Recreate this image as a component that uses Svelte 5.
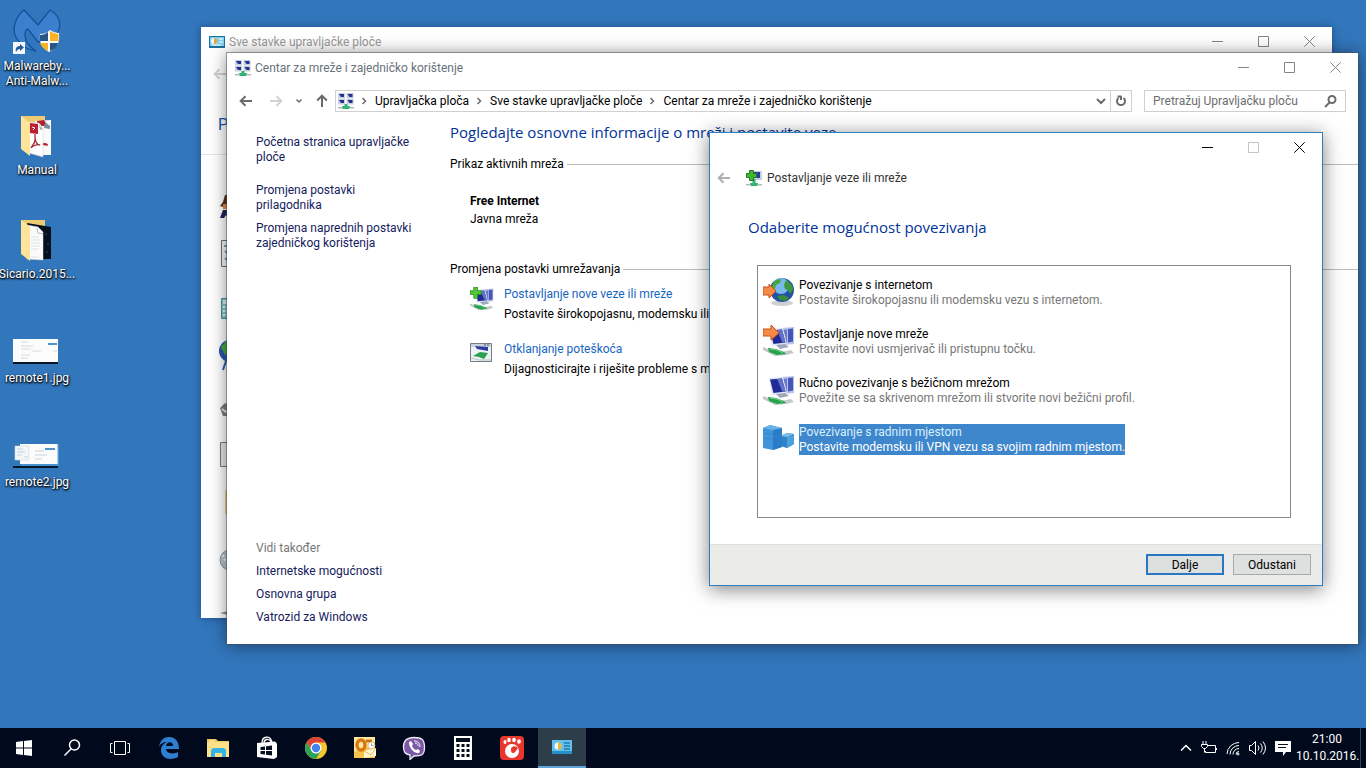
<script lang="ts">
	interface Shortcut {
		name: string;
		icon: string;
	}

	const shortcuts: Shortcut[] = [
		{ name: 'Malwareby... Anti-Malw...', icon: 'malware' },
		{ name: 'Manual', icon: 'manual' },
		{ name: 'Sicario.2015...', icon: 'movie' },
		{ name: 'remote1.jpg', icon: 'thumb1' },
		{ name: 'remote2.jpg', icon: 'thumb2' }
	];

	const crumbs = ['Upravljačka ploča', 'Sve stavke upravljačke ploče', 'Centar za mreže i zajedničko korištenje'];

	const tasks = [
		'Početna stranica upravljačke ploče',
		'Promjena postavki prilagodnika',
		'Promjena naprednih postavki zajedničkog korištenja'
	];

	const seeAlso = ['Internetske mogućnosti', 'Osnovna grupa', 'Vatrozid za Windows'];

	const options = [
		{ icon: 'globe', title: 'Povezivanje s internetom', text: 'Postavite širokopojasnu ili modemsku vezu s internetom.' },
		{ icon: 'newnet', title: 'Postavljanje nove mreže', text: 'Postavite novi usmjerivač ili pristupnu točku.' },
		{ icon: 'wireless', title: 'Ručno povezivanje s bežičnom mrežom', text: 'Povežite se sa skrivenom mrežom ili stvorite novi bežični profil.' },
		{ icon: 'work', title: 'Povezivanje s radnim mjestom', text: 'Postavite modemsku ili VPN vezu sa svojim radnim mjestom.' }
	];

	const apps = ['start', 'find', 'taskview', 'edge', 'explorer', 'store', 'chrome', 'outlook', 'viber', 'calc', 'gom', 'panel'];

	const panelItems = ['user', 'window', 'phone', 'earth', 'chip', 'box', 'folder', 'disc', 'tip'];

	let selected = $state(3);
	let query = $state('');
</script>

{#snippet network()}
	<svg width="16" height="16" viewBox="0 0 16 16" aria-hidden="true">
		<g fill="#c6cee0">
			<rect x="0" y="0" width="7" height="5.5" /><rect x="8.5" y="0" width="7" height="5.5" />
			<rect x="0" y="6" width="7" height="5.5" /><rect x="8.5" y="6" width="7" height="5.5" />
		</g>
		<g fill="#25308f">
			<path d="M1 1h5v3H3z" /><path d="M9.500 1h5v3h-3z" />
			<path d="M1 7h5v3H3z" /><path d="M9.500 7h5v3h-3z" />
		</g>
		<path d="M0 14h16v1.500H0z" fill="#b3bbb7" />
		<path d="M6.500 11h3v2H12l-1 3H5l-1-3h2.500z" fill="#2fb472" />
	</svg>
{/snippet}

{#snippet controls(disabled: boolean)}
	<div class="controls" class:disabled>
		<button aria-label="Minimiziraj"><svg width="11" height="11" viewBox="0 0 11 11"><path d="M0 5.500h11" /></svg></button>
		<button class="max" {disabled} aria-label="Maksimiziraj"><svg width="11" height="11" viewBox="0 0 11 11"><path d="M.5.5h10v10H.5z" /></svg></button>
		<button aria-label="Zatvori"><svg width="11" height="11" viewBox="0 0 11 11"><path d="M.3.3l10.400 10.400M10.700.3L.3 10.700" /></svg></button>
	</div>
{/snippet}

{#snippet arrow(dir: string)}
	<svg class="arrow {dir}" width="14" height="12" viewBox="0 0 14 12" aria-hidden="true">
		<path d="M13 6H2M6.500 1.200L1.700 6l4.800 4.800" />
	</svg>
{/snippet}

{#snippet monitors()}
	<path d="M18 3l13-1v17l-10 1z" fill="#b9c4e8" /><path d="M25 4l5-.5v13l-5 1z" fill="#4556b8" />
	<path d="M19 5l5-.5v14h-3z" fill="#6878c8" />
	<path d="M6 4l14-1 4 16-15 2z" fill="#dfe5f5" /><path d="M7 5.500l12-1 3.500 13-12 1.500z" fill="#202b96" />
	<path d="M14 5l5-.5 3.500 13-3 .3z" fill="#6272ca" />
	<path d="M13 20l9-1 4 3-9 2z" fill="#9fa8b8" />
{/snippet}

{#snippet cable()}
	<path d="M0 22l8 3 10 2 10-2 3 3-8 2-11 1-4-2-8-4z" fill="#c2c9c6" />
	<path d="M5 23l8 1 8 3 2 2-9 1-8-3z" fill="#25a24d" />
	<path d="M7 24l7 1 6 3" fill="none" stroke="#7cd08f" />
{/snippet}

<main class="desktop">
	<div class="shortcuts">
		{#each shortcuts as item}
			<button class="shortcut">
				<svg width="48" height="48" viewBox="0 0 48 48" aria-hidden="true">
					{#if item.icon === 'malware'}
						<path d="M11 2C2 9-2 23 4 31c4 6 11 11 19 12-8-5-13-12-10-21l2-1 10 13 12-2c11-7 15-21 0-30L25 17z" fill="#3b80cd" stroke="#174f9e" stroke-width="1.300" />
						<path d="M37 22c3 2 6 3 9 3 1 10-2 15-10 19-7-4-10-9-9-18 4 0 7-1 10-4z" fill="#fff" />
						<path d="M35 24v9h-8v-6c3 0 6-1 8-3z" fill="#285784" />
						<path d="M37 23c3 2 6 3 8.500 3v7H37z" fill="#f9b126" />
						<path d="M27 35h8v8c-5-3-7-5-8-8z" fill="#f9b126" /><path d="M37 35h8c-1 4-3 6-8 8z" fill="#285784" />
						<path d="M0 34h12v12H0z" fill="#f4f6f9" />
						<path d="M3 44c-1-4 1-6 4-6v-2l4 3.500L7 43v-2c-2 0-3 1-4 3z" fill="#245b9e" />
					{:else if item.icon === 'manual'}
						<path d="M8 4h24v30H12z" fill="#eccb74" />
						<path d="M22 9l16-1v35H23z" fill="#fafafa" />
						<path d="M24 9l7-1 4 6H24z" fill="#b61e30" /><path d="M32 10l5 4v3l-6-1z" fill="#7d8b9c" />
						<path d="M27 32c4-2 8-1 8 1s-4-1-8 1z" fill="#b61e30" />
						<path d="M16 10l10 1 4 5v29l-14-4z" fill="#fff" stroke="#cdcdcd" stroke-width=".5" />
						<path d="M17 11l8 1v10l-8-1z" fill="#bc1d2f" /><path d="M26 13l4 4-3 1z" fill="#aaa" />
						<path d="M19 15l3 1-2 2" stroke="#fff" fill="none" />
						<path d="M22 22v6c0 3-3 6-4 8 2-3 7-4 9-3-4 0-5-6-5-8" stroke="#a5303a" fill="none" stroke-width="1.300" />
						<path d="M8 4l9 7v33l-9-7z" fill="#ffe398" />
					{:else if item.icon === 'movie'}
						<path d="M8 4h24v8H12z" fill="#eccb74" />
						<path d="M14 7l24 4v32H20z" fill="#04101d" /><path d="M32 18h2M34 28h2M33 36h2" stroke="#2b4358" />
						<path d="M14 9l11 2 5 5v28l-16-1z" fill="#fbfbfb" stroke="#ddd" stroke-width=".5" />
						<path d="M24 12l1 5 5 1" fill="none" stroke="#b7bdc2" />
						<path d="M18 21h8M18 24h9M18 27h9M18 30h9M18 33h8M18 41h8" stroke="#e0e2e4" />
						<path d="M8 4l9 7v34l-9-7z" fill="#ffe398" />
					{:else if item.icon === 'thumb1'}
						<path d="M0 19h45v24H0z" fill="#fcfcfc" /><path d="M0 42h45v2H0z" fill="#061728" />
						<path d="M35 24h9" stroke="#4f94cd" stroke-width="2" /><path d="M8 22h7M8 26h12M8 29h10M19 31h9M8 35h9M8 38h7M40 31h4" stroke="#d6dce0" />
					{:else}
						<path d="M7 20h38v20H7z" fill="#fcfcfc" /><path d="M45 20v21H8" stroke="#59aee2" fill="none" />
						<path d="M2 22h14v14H2z" fill="#f4f7f9" stroke="#ccd4da" stroke-width=".6" />
						<path d="M4 25h6M4 28h8M4 31h5M11 33h4M22 27h9M22 31h12M22 35h7" stroke="#c7d3db" />
						<path d="M32 25h10" stroke="#4f94cd" stroke-width="2" /><path d="M0 42h45v2H0z" fill="#061728" />
					{/if}
				</svg>
				<span>{item.name}</span>
			</button>
		{/each}
	</div>

	<section class="window back-window" aria-label="Sve stavke upravljačke ploče">
		<header class="titlebar">
			<svg width="16" height="16" viewBox="0 0 16 16" aria-hidden="true">
				<path d="M0 2h16v12H0z" fill="#1f6f9c" /><path d="M1 3h14v9H1z" fill="#7ed0f3" />
				<circle cx="5" cy="7" r="3" fill="#eef8fe" /><path d="M5 7V4a3 3 0 010 6z" fill="#f2a325" />
				<path d="M10 5h4M10 8h4M3 11h9" stroke="#fff" />
			</svg>
			<span class="title">Sve stavke upravljačke ploče</span>
			{@render controls(false)}
		</header>
		<div class="back-nav">{@render arrow('left faded')}</div>
		<h2 class="back-heading">P</h2>
		<div class="panel-items">
			{#each panelItems as item}
				<svg width="32" height="32" viewBox="0 0 32 32" aria-hidden="true">
					{#if item === 'user'}
						<path d="M1 14l3-4 2-7 8-1v10l-2 5z" fill="#59301d" /><path d="M4 12h8v5H4z" fill="#e58a41" /><path d="M1 26l3-8h9v8H9l-2-3-2 3z" fill="#25225e" />
					{:else if item === 'window'}
						<path d="M2.500-2.500h25v26h-25z" fill="#f6f7f8" stroke="#687078" /><path d="M5 3h22M6 8l3 3M6 15l3 3" stroke="#4d7da2" stroke-width="1.500" />
					{:else if item === 'phone'}
						<path d="M2.500 4.500h16v20h-16z" fill="#87c2c5" stroke="#4c9298" /><path d="M4 6h12v4H4z" fill="#d8f2f0" /><path d="M4 13h12M4 17h12M4 21h12" stroke="#ecffff" stroke-width="2" stroke-dasharray="2 1" />
					{:else if item === 'earth'}
						<circle cx="11" cy="6" r="11" fill="#2857ad" /><path d="M2 2l6-7 6 2-3 9-5 4z" fill="#43ae36" /><path d="M4 25l4-12" stroke="#285da9" stroke-width="2" />
					{:else if item === 'chip'}
						<path d="M1 12l5-5 12 5-8 8H4z" fill="#7b7d80" /><path d="M3 13l4 3 4-4" stroke="#e3e5e7" stroke-width="2" fill="none" />
					{:else if item === 'box'}
						<path d="M1.500-4.500h25v24h-25z" fill="#e6e8e9" stroke="#747a80" />
					{:else if item === 'folder'}
						<path d="M6-8h22v24H6z" fill="#efd78f" />
					{:else if item === 'disc'}
						<circle cx="11" cy="11" r="10" fill="#b8c3c8" stroke="#87969d" /><path d="M4 6l3 8" stroke="#f5f8f9" stroke-dasharray="2 2" stroke-width="2" />
					{:else}
						<path d="M1 13l8-2v4z" fill="#8d9093" />
					{/if}
				</svg>
			{/each}
		</div>
	</section>

	<section class="window center-window" aria-label="Centar za mreže i zajedničko korištenje">
		<header class="titlebar">
			{@render network()}
			<span class="title">Centar za mreže i zajedničko korištenje</span>
			{@render controls(false)}
		</header>
		<nav class="toolbar" aria-label="Navigacija">
			<button class="nav-button" aria-label="Natrag">{@render arrow('left')}</button>
			<button class="nav-button" aria-label="Naprijed">{@render arrow('right faded')}</button>
			<button class="nav-recent" aria-label="Nedavna mjesta"><svg width="6" height="6" viewBox="0 0 6 6"><path d="M.5 1.500L3 4l2.500-2.500" /></svg></button>
			<button class="nav-button" aria-label="Gore">{@render arrow('up')}</button>
			<div class="address">
				{@render network()}
				{#each crumbs as crumb}
					<svg class="chevron" width="6" height="8" viewBox="0 0 6 8" aria-hidden="true"><path d="M1.500 1l3 3-3 3" /></svg>
					<a href="#crumb">{crumb}</a>
				{/each}
				<button class="drop" aria-label="Prethodna mjesta"><svg width="10" height="8" viewBox="0 0 10 8"><path d="M1 2l4 4 4-4" /></svg></button>
				<button class="refresh" aria-label="Osvježi"><svg width="12" height="12" viewBox="0 0 12 12"><path d="M8.500 3a4 4 0 11-5 0M2.500 1.500h4M6 1v4" /></svg></button>
			</div>
			<label class="search">
				<input type="text" placeholder="Pretražuj Upravljačku ploču" aria-label="Pretražuj Upravljačku ploču" bind:value={query} />
				<svg width="13" height="13" viewBox="0 0 13 13" aria-hidden="true"><circle cx="8" cy="4.500" r="3.500" /><path d="M5.500 7.500L1 12" /></svg>
			</label>
		</nav>
		<div class="content">
			<aside class="sidebar">
				{#each tasks as task, i}
					<a href="#task" class:home={i === 0}>{task}</a>
				{/each}
				<div class="see-also">
					<h3>Vidi također</h3>
					{#each seeAlso as link}
						<a href="#see">{link}</a>
					{/each}
				</div>
			</aside>
			<div class="details">
				<h1>Pogledajte osnovne informacije o mreži i postavite veze</h1>
				<h2 class="group">Prikaz aktivnih mreža</h2>
				<div class="active-network">
					<strong>Free Internet</strong>
					<span>Javna mreža</span>
				</div>
				<h2 class="group">Promjena postavki umrežavanja</h2>
				<div class="setting">
					<svg width="24" height="24" viewBox="0 0 32 32" aria-hidden="true">
						{@render monitors()}{@render cable()}
						<path d="M5 0h5v5h5v5h-5v5H5v-5H0V5h5z" fill="#50c832" stroke="#238a23" />
					</svg>
					<div>
						<a href="#new">Postavljanje nove veze ili mreže</a>
						<p>Postavite širokopojasnu, modemsku ili VPN vezu</p>
					</div>
				</div>
				<div class="setting">
					<svg width="24" height="24" viewBox="0 0 24 24" aria-hidden="true">
						<path d="M.5 1.500h21v18H.5z" fill="#edf2f5" stroke="#727d87" /><path d="M1 2h20v3H1z" fill="#c8d2db" /><path d="M14 3h6" stroke="#46505d" stroke-dasharray="2 1" />
						<path d="M5 4l13 1v4L7 7z" fill="#2f39a0" /><path d="M3 14l7-4 8 1-4 6-5-2z" fill="#2ba054" /><path d="M1 16l8 2h12" stroke="#bac7c0" fill="none" />
					</svg>
					<div>
						<a href="#fix">Otklanjanje poteškoća</a>
						<p>Dijagnosticirajte i riješite probleme s mrežom</p>
					</div>
				</div>
			</div>
		</div>
	</section>

	<section class="window dialog" aria-label="Postavljanje veze ili mreže">
		{@render controls(true)}
		<header class="dialog-header">
			<button class="nav-button" aria-label="Natrag">{@render arrow('left muted')}</button>
			<svg width="16" height="16" viewBox="0 0 16 16" aria-hidden="true">
				<path d="M5 1h11v9H5z" fill="#c8d0e4" /><path d="M7 2h7v6H7z" fill="#2e3ba3" />
				<path d="M0 14h16v1.500H0z" fill="#b3bbb7" /><path d="M6.500 9h3v4H12l-1 3H5l-1-3h2.500z" fill="#2fb472" />
				<path d="M3.500.5h4v3h3v4h-3v3h-4v-3h-3v-4h3z" fill="#45b530" stroke="#1f7d22" />
			</svg>
			<span>Postavljanje veze ili mreže</span>
		</header>
		<h1>Odaberite mogućnost povezivanja</h1>
		<div class="options" role="listbox" aria-label="Mogućnosti povezivanja">
			{#each options as option, i}
				<button class="option" role="option" aria-selected={selected === i} class:selected={selected === i} onclick={() => (selected = i)}>
					<svg width="32" height="32" viewBox="0 0 32 32" aria-hidden="true">
						{#if option.icon === 'globe'}
							<ellipse cx="19" cy="27" rx="11" ry="3" fill="#9ba4ab" opacity=".5" />
							<circle cx="19" cy="14" r="12" fill="#2450a8" /><circle cx="18" cy="10" r="8" fill="#7ab9ee" />
							<path d="M13 4l5-1-1 4-4 2-1 4-3-1c0-4 1-6 4-8z" fill="#48a83e" /><path d="M23 4c4 2 7 5 7 10l-3 4-2-4-3-1-1-4z" fill="#3f993a" /><path d="M14 20l7-1 5 3-4 3-5-1z" fill="#398d35" />
							<path d="M0 11h6V8l7 7-7 7v-3H0z" fill="#f58a46" stroke="#c65316" />
						{:else if option.icon === 'newnet'}
							{@render monitors()}{@render cable()}
							<path d="M0 4h8V0l8 8-8 7v-4H0z" fill="#f58a46" stroke="#c65316" />
						{:else if option.icon === 'wireless'}
							{@render monitors()}{@render cable()}
						{:else}
							<path d="M17 13l7-3 7 1v10l-7 4-7-2z" fill="#2f83ca" /><path d="M24 14l7-2v9l-7 4z" fill="#4aa1dc" /><path d="M17 13l7-3 7 1-7 3z" fill="#78bce8" />
							<path d="M0 5l7-3 12 3v19l-9 3-10-2z" fill="#3f94da" /><path d="M10 7l9-2v19l-9 3z" fill="#2a7cc6" /><path d="M0 5l7-3 12 3-9 2z" fill="#69b2e8" />
							<path d="M1 10l8 1M1 15l8 1M11 14l7-2" stroke="#3588cd" />
						{/if}
					</svg>
					<span class="option-text">
						<span>{option.title}</span>
						<span class="option-hint">{option.text}</span>
					</span>
				</button>
			{/each}
		</div>
		<footer>
			<button class="action primary">Dalje</button>
			<button class="action">Odustani</button>
		</footer>
	</section>
</main>

<div class="taskbar">
	{#each apps as app}
		<button class="task {app}" aria-label={app}>
			<svg width="24" height="24" viewBox="0 0 24 24" aria-hidden="true">
				{#if app === 'start'}
					<path d="M4 6l7-1v6.500H4zM12 4.900L20 4v7.500h-8zM4 12.500h7V19l-7-1zM12 12.500h8V20l-8-1z" fill="#fff" />
				{:else if app === 'find'}
					<circle cx="14.500" cy="9" r="5" fill="none" stroke="#fff" stroke-width="1.500" /><path d="M11 13l-6.500 6.500" stroke="#fff" stroke-width="1.500" />
				{:else if app === 'taskview'}
					<path d="M6.500 5.500h11v13h-11zM4.500 7.500h-2v9h2M19.500 7.500h2v9h-2" fill="none" stroke="#fff" />
				{:else if app === 'edge'}
					<path d="M2 11C3 4 7 1 12 1c7 0 10 5 10 12H9c0 4 7 6 12 3v5c-7 4-17 2-17-7 0-4 3-7 6-8-4 0-7 2-8 5zm7-1h7c0-5-6-5-7 0z" fill="#2f7fd0" fill-rule="evenodd" />
				{:else if app === 'explorer'}
					<path d="M1 3h9l2 2h11v16H1z" fill="#efc758" /><path d="M1 6h22v15H1z" fill="#ffe08a" /><path d="M5 21v-7l2-2h11l2 2v7h-4v-4H9v4z" fill="#36b3e5" /><path d="M3 5h6" stroke="#fff5cb" />
				{:else if app === 'store'}
					<path d="M7 7c0-7 8-8 10-1M9 7c0-4 5-5 7-1" stroke="#fff" fill="none" stroke-width="1.300" /><path d="M2 7l18-1.500 2 2V21l-3 2-17-2z" fill="#fff" />
					<path d="M5.500 11l4.500-.6V14H5.500zM11 10.300l6-.8V14h-6zM5.500 15H10v3.600L5.500 18zM11 15h6v4.500l-6-.8z" fill="#07101f" />
				{:else if app === 'chrome'}
					<circle cx="12" cy="12" r="11" fill="#f4c72c" /><path d="M2.500 6.500A11 11 0 0121.500 6.500H12L8 14z" fill="#db4437" /><path d="M2.500 6.500A11 11 0 0012 23l5-8.500H8z" fill="#2da05a" />
					<circle cx="12" cy="12" r="5.500" fill="#fff" /><circle cx="12" cy="12" r="4.200" fill="#4383ec" />
				{:else if app === 'outlook'}
					<path d="M1 1h21v21H1z" fill="#fce8a5" /><path d="M1 16l21-8v14H1z" fill="#f7c34b" /><ellipse cx="8" cy="9" rx="4" ry="5" fill="none" stroke="#d77910" stroke-width="3.500" />
					<path d="M13 5h6" stroke="#cf741a" stroke-width="3" /><path d="M11 15l12-3v8l-12 2z" fill="#fff5d2" /><path d="M11 15l7 4 5-7" stroke="#e4b765" fill="none" /><circle cx="18.500" cy="9.500" r="3.500" fill="#fff" stroke="#c99d5d" stroke-width=".7" /><path d="M18.500 7.500v2h2" stroke="#777" fill="none" stroke-width=".7" />
				{:else if app === 'viber'}
					<path d="M12 1.500c8 0 10.500 2 10.500 10S19 20 12 20l-4 3.500V19c-5-1-6.500-3-6.500-8s2-9.500 10.500-9.500z" fill="#7b59a7" stroke="#efeaf7" stroke-width="1.300" />
					<path d="M7 6l2-1 2 3-1 2c1 2 2 3 4 4l2-1 2 2-1 2c-4 1-9-4-10-9z" fill="#fff" /><path d="M12 5c4 0 6 2 6 6M13 7c2 0 3 1 3 3" stroke="#fff" fill="none" />
				{:else if app === 'calc'}
					<path d="M3 0h18v24H3z" fill="#fff" /><path d="M5 2h14v4H5z" fill="#07101f" />
					<path d="M5.500 9.500h13M5.500 14.500h13M5.500 19.500h13" stroke="#07101f" stroke-width="3" stroke-dasharray="3 2" />
				{:else if app === 'gom'}
					<rect x="0" y="0" width="24" height="24" rx="4" fill="#e8372f" /><circle cx="12" cy="15" r="7" fill="#fff" /><path d="M11 13c0-3 6-4 7 0-2 0-2 4-5 4-2 0-2-2-2-4z" fill="#e8372f" />
					<ellipse cx="5" cy="6" rx="1.500" ry="2" fill="#fff" /><ellipse cx="9" cy="4" rx="1.800" ry="2.300" fill="#fff" /><ellipse cx="14" cy="4" rx="1.800" ry="2.300" fill="#fff" /><ellipse cx="19" cy="5.500" rx="1.800" ry="2.300" fill="#fff" />
				{:else}
					<path d="M2 5h20v14H2z" fill="#64bfe9" /><path d="M2 16h20v3H2z" fill="#2a8fc8" /><circle cx="8" cy="11" r="3.500" fill="#f1faff" /><path d="M8 11V7.500a3.500 3.500 0 010 7z" fill="#e8b43c" />
					<path d="M14 8h6M14 11h6M14 14h6" stroke="#1e79b4" stroke-width="1.500" />
				{/if}
			</svg>
		</button>
	{/each}
	<div class="tray">
		<button aria-label="Prikaži skrivene ikone"><svg width="12" height="16" viewBox="0 0 12 16"><path class="bold" d="M1 10.500L6 5.500l5 5" /></svg></button>
		<button aria-label="Baterija"><svg width="16" height="16" viewBox="0 0 16 16"><path d="M7 5.500h7.500v7h-10V11M15.500 8v2M2 1v3M5 1v3M.5 4.500h6v2l-2 2h-2l-2-2zM3.500 8v4.500" /></svg></button>
		<button aria-label="Mreža"><svg width="14" height="16" viewBox="0 0 14 16"><path d="M1 14A12 12 0 0113 2.500M4 14.500A9 9 0 0113 5.500M7 14.500A6 6 0 0113 8.500M10 14.500a3 3 0 013-3" /><circle cx="12" cy="14" r="1" /></svg></button>
		<button aria-label="Zvuk"><svg width="17" height="16" viewBox="0 0 17 16"><path d="M.5 5.500h2l4-4v13l-4-4h-2zM9 5.500q2 2.500 0 5M11.500 3.500q3.500 4.500 0 9M14 1.500q5 6.500 0 13" /></svg></button>
		<button aria-label="Obavijesti"><svg width="16" height="16" viewBox="0 0 16 16"><path class="solid" d="M0 1h16v11h-5l-3 4v-4H0z" /><path class="dark" d="M3 4.500h10M3 7.500h8" /></svg></button>
	</div>
	<div class="clock">
		<span>21:00</span>
		<span>10.10.2016.</span>
	</div>
</div>

<style>
	:global(body) {
		height: 100vh;
		overflow: hidden;
		background: #3276bc;
		font-family: Roboto, 'Open Sans', 'Noto Sans', sans-serif;
		font-size: 12px;
		line-height: 15px;
		color: #000;
	}

	:global(#app) {
		height: 100%;
		display: flex;
		flex-direction: column;
	}

	button {
		border: 0;
		padding: 0;
		background: none;
		font: inherit;
		color: inherit;
	}

	a {
		text-decoration: none;
		color: inherit;
	}

	h1,
	h2,
	h3,
	p {
		margin: 0;
		font-size: 12px;
		font-weight: 400;
	}

	h1 {
		font-family: 'Open Sans', 'Noto Sans', sans-serif;
		font-size: 15px;
		line-height: 20px;
		color: #003399;
		white-space: nowrap;
	}

	svg {
		display: block;
		flex: none;
	}

	.desktop {
		position: relative;
		flex: 1;
		min-height: 0;
	}

	.shortcuts {
		width: 74px;
	}

	.shortcut {
		display: flex;
		flex-direction: column;
		align-items: center;
		gap: 3px;
		width: 100%;
		height: 104px;
		padding-top: 8px;
		color: #fff;
		text-shadow: 1px 1px 2px #000, 0 1px 2px #000;
	}

	.window {
		position: absolute;
		display: flex;
		flex-direction: column;
		overflow: hidden;
		background: #fff;
		box-sizing: border-box;
	}

	.back-window {
		inset: 27px 34px 110px 201px;
		box-shadow: 0 0 8px rgba(0, 20, 60, 0.4);
	}

	.center-window {
		inset: 53px 8px 84px 227px;
		box-shadow: 0 0 0 1px rgba(60, 80, 90, 0.5), 0 1px 16px rgba(0, 0, 0, 0.5);
	}

	.dialog {
		inset: 132px 43px 142px 709px;
		border: 1px solid #2b7fbc;
		box-shadow: 0 3px 18px rgba(0, 0, 0, 0.5);
	}

	.titlebar {
		display: flex;
		align-items: center;
		gap: 4px;
		height: 29px;
		padding-left: 8px;
		flex: none;
	}

	.title {
		flex: 1;
		padding-top: 1px;
		color: #68717a;
	}

	.back-window .title {
		color: #999;
	}

	.controls {
		display: flex;
		justify-content: flex-end;
		flex: none;
		height: 29px;
	}

	.controls button {
		display: flex;
		align-items: center;
		justify-content: center;
		width: 46px;
	}

	.controls path {
		fill: none;
		stroke: #858585;
	}

	.controls.disabled path {
		stroke: #000;
	}

	.controls.disabled .max path {
		stroke: #c4c4c4;
	}

	.arrow path {
		fill: none;
		stroke: #6b6b6b;
		stroke-width: 2;
	}

	.arrow.right {
		transform: rotate(180deg);
	}

	.arrow.up {
		transform: rotate(90deg);
	}

	.arrow.faded path {
		stroke: #d2d2d2;
	}

	.arrow.muted path {
		stroke: #b0b0b0;
	}

	.back-nav {
		padding: 12px;
	}

	.back-heading {
		margin-top: 23px;
		padding: 0 17px 19px;
		border-bottom: 1px solid #e5e5e5;
		font-size: 16px;
		line-height: 20px;
		color: #2053a4;
	}

	.panel-items {
		display: flex;
		flex-direction: column;
		gap: 19px;
		padding: 37px 18px;
	}

	.panel-items svg {
		overflow: visible;
	}

	.toolbar {
		display: flex;
		align-items: center;
		flex: none;
		height: 38px;
		padding: 0 12px;
	}

	.nav-button {
		display: flex;
		justify-content: center;
		width: 14px;
	}

	.toolbar .nav-button + .nav-button {
		margin-left: 16px;
	}

	.nav-recent {
		margin: 0 13px;
	}

	.nav-recent path,
	.chevron path,
	.drop path,
	.refresh path,
	.search path,
	.search circle {
		fill: none;
		stroke: #6b6b6b;
		stroke-width: 2;
	}

	.nav-recent path,
	.chevron path {
		stroke-width: 1.5;
	}

	.address {
		display: flex;
		align-items: center;
		flex: 1;
		height: 20px;
		margin-left: 6px;
		padding-left: 2px;
		border: 1px solid #d0d0d0;
	}

	.chevron {
		margin: 0 8px 0 7px;
	}

	.drop {
		margin-left: auto;
		padding: 4px;
	}

	.refresh {
		align-self: stretch;
		padding: 0 4px;
		border-left: 1px solid #d0d0d0;
	}

	.search {
		display: flex;
		align-items: center;
		box-sizing: border-box;
		width: 202px;
		height: 22px;
		margin-left: 12px;
		padding: 0 8px;
		border: 1px solid #d0d0d0;
	}

	.search input {
		flex: 1;
		min-width: 0;
		border: 0;
		padding: 0;
		outline: 0;
		background: none;
		font: inherit;
	}

	.search input::placeholder {
		color: #6d6d6d;
		opacity: 1;
	}

	.content {
		display: flex;
		flex: 1;
		min-height: 0;
	}

	.sidebar {
		display: flex;
		flex-direction: column;
		gap: 8px;
		flex: none;
		width: 160px;
		padding: 15px 34px 19px 29px;
		color: #15215c;
	}

	.sidebar .home {
		margin-bottom: 10px;
	}

	.see-also {
		display: flex;
		flex-direction: column;
		gap: 8px;
		margin-top: auto;
	}

	.see-also h3 {
		color: #777;
	}

	.details {
		flex: 1;
		min-width: 0;
		padding-top: 2px;
	}

	.group {
		display: flex;
		align-items: center;
		gap: 3px;
		margin-top: 15px;
	}

	.group::after {
		content: '';
		flex: 1;
		height: 1px;
		background: #b9bdbd;
	}

	.active-network {
		display: flex;
		flex-direction: column;
		gap: 3px;
		padding: 22px 20px 20px;
	}

	.active-network strong {
		font-weight: 700;
	}

	.setting {
		display: flex;
		gap: 10px;
		padding: 10px 20px;
		white-space: nowrap;
	}

	.setting a {
		color: #1766bf;
	}

	.setting p {
		margin-top: 5px;
	}

	.dialog-header {
		display: flex;
		align-items: center;
		height: 31px;
		padding-left: 7px;
		color: #333;
	}

	.dialog-header .nav-button {
		margin-right: 15px;
	}

	.dialog-header span {
		margin-left: 5px;
		padding-top: 1px;
	}

	.dialog h1 {
		margin: 24px 38px 0;
	}

	.options {
		flex: 1;
		margin: 28px 31px 26px 47px;
		padding-top: 9px;
		border: 1px solid #828790;
	}

	.option {
		display: flex;
		align-items: center;
		gap: 4px;
		height: 34px;
		margin: 0 0 15px 5px;
		text-align: left;
	}

	.option-text {
		display: flex;
		flex-direction: column;
		padding-top: 1px;
		white-space: nowrap;
	}

	.option-hint {
		color: #777;
	}

	.selected .option-text {
		background: #3f87cc;
		color: #d9f0ff;
	}

	.selected .option-hint {
		color: #fff;
	}

	footer {
		display: flex;
		justify-content: flex-end;
		gap: 9px;
		padding: 9px 11px 10px;
		border-top: 1px solid #dfdfdf;
		background: #ebebea;
	}

	.action {
		width: 78px;
		height: 21px;
		border: 1px solid #a5a8a8;
		padding-top: 1px;
		background: #dedfdf;
	}

	.action.primary {
		border: 2px solid #2b76c2;
	}

	.taskbar {
		display: flex;
		flex: none;
		height: 40px;
		background: #010a1c;
		color: #fff;
	}

	.task {
		display: flex;
		align-items: center;
		justify-content: center;
		width: 49px;
	}

	.task.start,
	.task.find,
	.task.taskview {
		width: 48px;
	}

	.task.panel {
		width: 48px;
		box-sizing: border-box;
		margin-left: 2px;
		border-bottom: 2px solid #5ea5dc;
		background: #2e3d4a;
	}

	.tray {
		display: flex;
		align-items: center;
		gap: 9px;
		margin-left: auto;
	}

	.tray path,
	.tray circle {
		fill: none;
		stroke: #fff;
	}

	.tray .bold {
		stroke-width: 1.5;
	}

	.tray .solid {
		fill: #fff;
		stroke: none;
	}

	.tray .dark {
		stroke: #07101f;
	}

	.clock {
		display: flex;
		flex-direction: column;
		justify-content: center;
		width: 62px;
		margin: 0 5px;
		padding-right: 2px;
		border-right: 1px solid #364150;
		line-height: 17px;
		text-align: center;
	}
</style>
